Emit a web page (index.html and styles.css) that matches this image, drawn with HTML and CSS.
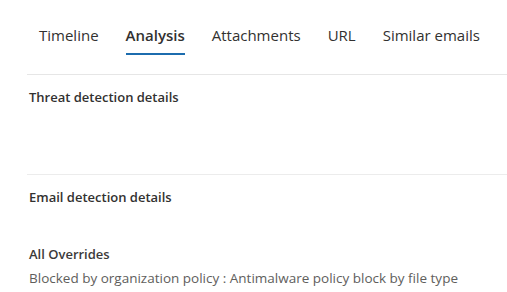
FILE: index.html
```html
<!DOCTYPE html>
<html lang="en">
<head>
    <meta charset="UTF-8">
    <meta name="viewport" content="width=device-width, initial-scale=1.0">
    <title>Email entity - Analysis</title>
    <link rel="stylesheet" href="styles.css">
</head>
<body>
    <div class="panel">
        <nav class="tabs">
            <a class="tab">Timeline</a>
            <a class="tab active">Analysis</a>
            <a class="tab">Attachments</a>
            <a class="tab">URL</a>
            <a class="tab">Similar emails</a>
        </nav>

        <section class="section threat">
            <h3>Threat detection details</h3>
        </section>

        <section class="section email">
            <h3>Email detection details</h3>
            <div class="field">
                <h4>All Overrides</h4>
                <p>Blocked by organization policy : Antimalware policy block by file type</p>
            </div>
        </section>
    </div>
</body>
</html>
```

FILE: styles.css
```css
body { margin: 0; background: #fff; font-family: "Open Sans", "Noto Sans", sans-serif; color: #323130; }
.panel { padding-left: 27px; }

.tabs { display: flex; gap: 27px; padding: 24px 0 0 12px; height: 75px; box-sizing: border-box; border-bottom: 1px solid #e6e6e6; }
.tab { font-size: 15px; line-height: 22px; color: #323130; height: 31px; box-sizing: border-box; cursor: pointer; }
.tab.active { font-weight: 600; border-bottom: 2px solid #1c6cae; }

.section { padding: 13px 0 0 2px; }
.section h3 { margin: 0; font-size: 13px; font-weight: 600; line-height: 18px; }
.threat { height: 100px; box-sizing: border-box; border-bottom: 1px solid #ececec; }
.field { margin-top: 39px; }
.field h4 { margin: 0; font-size: 13px; font-weight: 600; line-height: 18px; color: #3b3a39; }
.field p { margin: 6px 0 0; font-size: 13.5px; line-height: 18px; color: #605e5c; }
```
